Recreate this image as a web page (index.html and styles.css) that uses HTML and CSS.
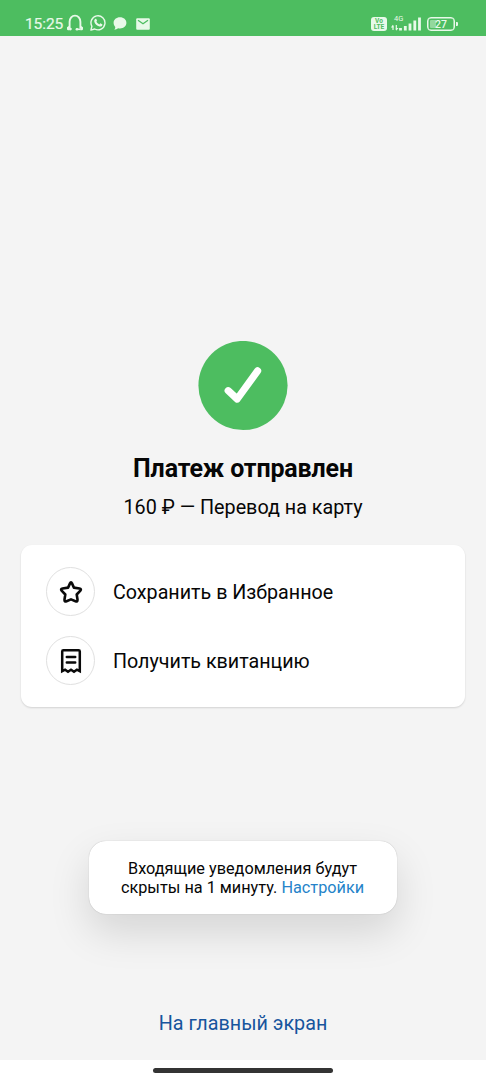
FILE: index.html
```html
<!DOCTYPE html>
<html lang="ru">
<head>
<meta charset="utf-8">
<title>Платеж отправлен</title>
<link rel="stylesheet" href="styles.css">
</head>
<body>
<header class="status">
  <span class="time">15:25</span>
  <svg class="ic-headset" width="18" height="18" viewBox="0 0 18 18"><path d="M3.600 14.500V7.800a5.400 6.200 0 0 1 10.800 0v6.700" fill="none" stroke="#e8f9e9" stroke-width="1.900"/><path d="M3.600 11.500v4.700H2.200a1.300 1.300 0 0 1-1.200-1.300v-1.600zM14.400 11.500v4.700h1.400a1.300 1.300 0 0 0 1.200-1.300v-1.600z" fill="#e8f9e9"/><circle cx="4.400" cy="15.100" r="1.400" fill="#e8f9e9"/><path d="M10.700 15.300h4" stroke="#e8f9e9" stroke-width="1.600"/><circle cx="10.900" cy="15.200" r="1.300" fill="#e8f9e9"/></svg>
  <svg class="ic-phone" width="16" height="16" viewBox="0 0 16 16"><path d="M.9 15.100l1-3.800A7 7 0 1 1 4.700 14z" fill="none" stroke="#e8f9e9" stroke-width="1.400" stroke-linejoin="round"/><path d="M5.200 4c.5-.4 1-.3 1.200.2l.6 1.400c.1.3-.2.7-.6 1.200.7 1.200 1.600 2 2.900 2.600l.8-.9c.2-.2.4-.2.6-.1l1.500.8c.4.2.3.900-.1 1.500-.6.8-1.700 1-2.700.7C6.900 10.700 5 8.900 4.400 7 4 5.800 4.400 4.600 5.200 4z" fill="#e8f9e9"/></svg>
  <svg class="ic-chat" width="14" height="13" viewBox="0 0 14 13"><path d="M7 .3c3.700 0 6.400 2.400 6.400 5.500s-2.700 5.600-6.400 5.600c-.6 0-1.200 0-1.800-.2-1.100.9-2.400 1.400-3.900 1.500.7-.8 1-1.700 1-2.700C1.200 9 .6 7.500.6 5.800.6 2.700 3.300.3 7 .3z" fill="#e8f9e9"/></svg>
  <svg class="ic-mail" width="14" height="12" viewBox="0 0 14 12"><rect x=".2" y=".2" width="13.600" height="11.600" rx="1" fill="#e8f9e9"/><path d="M2 2.300l5 3.500 5-3.500" fill="none" stroke="#4dbd60" stroke-width="1.300"/></svg>
  <span class="volte"><span>Vo</span><span>LTE</span></span>
  <span class="signal">
    <span class="net">4G</span>
    <svg width="31" height="16" viewBox="0 0 31 16"><path d="M2 14V9.500M5.300 9v5" stroke="#e8f9e9" stroke-width="1.200"/><path d="M-.2 11.500L2 8.800l.5 2.700zM7.500 12.100l-2.200 2.700-.5-2.700z" fill="#e8f9e9"/><path d="M9.500 14.500v-2.500M14.300 14.500v-4.500M19 14.500V7.500M23.800 14.500V4.500M28.500 14.500V1.500" stroke="#e8f9e9" stroke-width="2.800"/></svg>
  </span>
  <span class="battery"><span class="charge">27</span></span>
</header>

<main class="screen">
  <svg class="success" width="90" height="90" viewBox="0 0 90 90"><circle cx="45" cy="44.500" r="44.600" fill="#4dbd60"/><path d="M30.200 49.700l9 8.300L59.600 29.900" fill="none" stroke="#fff" stroke-width="7.200" stroke-linecap="round" stroke-linejoin="round"/></svg>
  <h1 class="title">Платеж отправлен</h1>
  <p class="amount">160 ₽ — Перевод на карту</p>

  <section class="card">
    <div class="row">
      <span class="round"><svg width="24" height="24" viewBox="0 0 24 24"><path d="M12 2.400Q12.600 2.400 13 3.400L14.900 7.600 20.400 8.500Q22.800 9 21.400 10.600L17.700 14.500 18.500 19.500Q18.700 22 16.500 21.200L12 19.400 7.500 21.200Q5.300 22 5.500 19.500L6.300 14.500 2.600 10.600Q1.200 9 3.600 8.500L9.100 7.600 11 3.400Q11.400 2.400 12 2.400z" fill="none" stroke="#0a0a0a" stroke-width="2.600" stroke-linejoin="round"/></svg></span>
      <span class="label">Сохранить в Избранное</span>
    </div>
    <div class="row">
      <span class="round"><svg width="24" height="26" viewBox="0 0 24 26"><path d="M3.200 23.200V3.400Q3.200 2.200 4.400 2.200H19.600Q20.800 2.200 20.800 3.400V23.200L17.900 21.700 15 23.700 12 21.700 9 23.700 6.100 21.700z" fill="none" stroke="#0a0a0a" stroke-width="2.500"/><path d="M7.800 8.900h8.400M7.800 14.500h8.400" stroke="#0a0a0a" stroke-width="2.500" stroke-linecap="round"/></svg></span>
      <span class="label">Получить квитанцию</span>
    </div>
  </section>

  <aside class="toast">Входящие уведомления будут<br>скрыты на 1 минуту. <a class="settings">Настройки</a></aside>
  <a class="home">На главный экран</a>
</main>
<footer class="nav"><span class="handle"></span></footer>
</body>
</html>
```
FILE: styles.css
```css
* { box-sizing: border-box; }
body {
  margin: 0;
  width: 486px;
  height: 1080px;
  display: flex;
  flex-direction: column;
  overflow: hidden;
  background: #fff;
  color: #060606;
  font-family: Roboto, "Liberation Sans", sans-serif;
}
svg { display: block; flex: none; }
.status {
  height: 36px;
  flex: none;
  display: flex;
  align-items: flex-start;
  padding-left: 25px;
  background: #4dbd60;
  color: #e8f9e9;
}
.time { width: 41px; margin-top: 14px; font-size: 15.500px; line-height: 20px; letter-spacing: -.1px; white-space: nowrap; -webkit-text-stroke: .2px #e8f9e9; }
.ic-headset { margin-top: 14px; }
.ic-phone { margin: 15px 0 0 6px; }
.ic-chat { margin: 17px 0 0 7px; }
.ic-mail { margin: 18px 0 0 9px; }
.volte {
  width: 16px;
  height: 14px;
  margin: 17px 0 0 221px;
  padding-top: 1px;
  border-radius: 3px;
  background: #e8f9e9;
  color: #4dbd60;
  display: flex;
  flex-direction: column;
  align-items: center;
  font-size: 6.500px;
  font-weight: 700;
  line-height: 6px;
}
.signal { position: relative; margin: 16px 0 0 4px; }
.net { position: absolute; left: 3px; top: -1px; font-size: 7.500px; line-height: 7px; }
.battery {
  position: relative;
  width: 28px;
  height: 14px;
  margin: 17px 0 0 5px;
  border: 1.500px solid #e8f9e9;
  border-width: 1.500px;
  border-radius: 4px;
  box-shadow: inset 0 0 0 .5px #e8f9e9;
}
.battery::after {
  content: "";
  position: absolute;
  right: -4px;
  top: 4px;
  width: 2px;
  height: 4px;
  border-radius: 0 1px 1px 0;
  background: #e8f9e9;
}
.charge {
  display: block;
  height: 8px;
  margin: 2px;
  border-radius: 1px;
  background: linear-gradient(90deg, #93d89d 27%, transparent 27%);
  text-align: center;
  font-size: 10.500px;
  font-weight: 500;
  line-height: 9px;
}
.screen {
  height: 1024px;
  flex: none;
  display: flex;
  flex-direction: column;
  align-items: center;
  background: #f4f4f4;
}
.success { margin-top: 305px; }
.title { margin: 22px 0 0; font-size: 25px; font-weight: 700; line-height: 31px; letter-spacing: -.15px; white-space: nowrap; }
.amount { margin: 12px 0 0; font-size: 19.750px; line-height: 24px; white-space: nowrap; }
.card {
  width: 444px;
  height: 162px;
  margin-top: 24.500px;
  padding: 22.500px 25px 0;
  display: flex;
  flex-direction: column;
  gap: 20px;
  border-radius: 11px;
  background: #fff;
  box-shadow: 0 1px 2px rgba(0, 0, 0, .14);
}
.row { height: 49px; display: flex; align-items: center; gap: 18px; }
.round {
  width: 49px;
  height: 49px;
  display: flex;
  align-items: center;
  justify-content: center;
  border: 1px solid #e0e0e0;
  border-radius: 50%;
}
.label { padding-top: 3px; font-size: 19.700px; line-height: 24px; white-space: nowrap; }
.toast {
  width: 308px;
  height: 73px;
  margin-top: 134.500px;
  padding: 18px 1px 0 0;
  border-radius: 17px;
  background: #fff;
  box-shadow: 0 0 1px rgba(0, 0, 0, .3), 0 18px 40px rgba(0, 0, 0, .13);
  text-align: center;
  font-size: 16.250px;
  line-height: 19px;
  white-space: nowrap;
}
.settings { color: #2583c9; }
.home { margin-top: 98px; color: #17559d; font-size: 19.750px; line-height: 24px; white-space: nowrap; }
.nav { height: 20px; display: flex; justify-content: center; padding-top: 8px; }
.handle { width: 180px; height: 4.500px; border-radius: 2.500px; background: #343434; }
```
